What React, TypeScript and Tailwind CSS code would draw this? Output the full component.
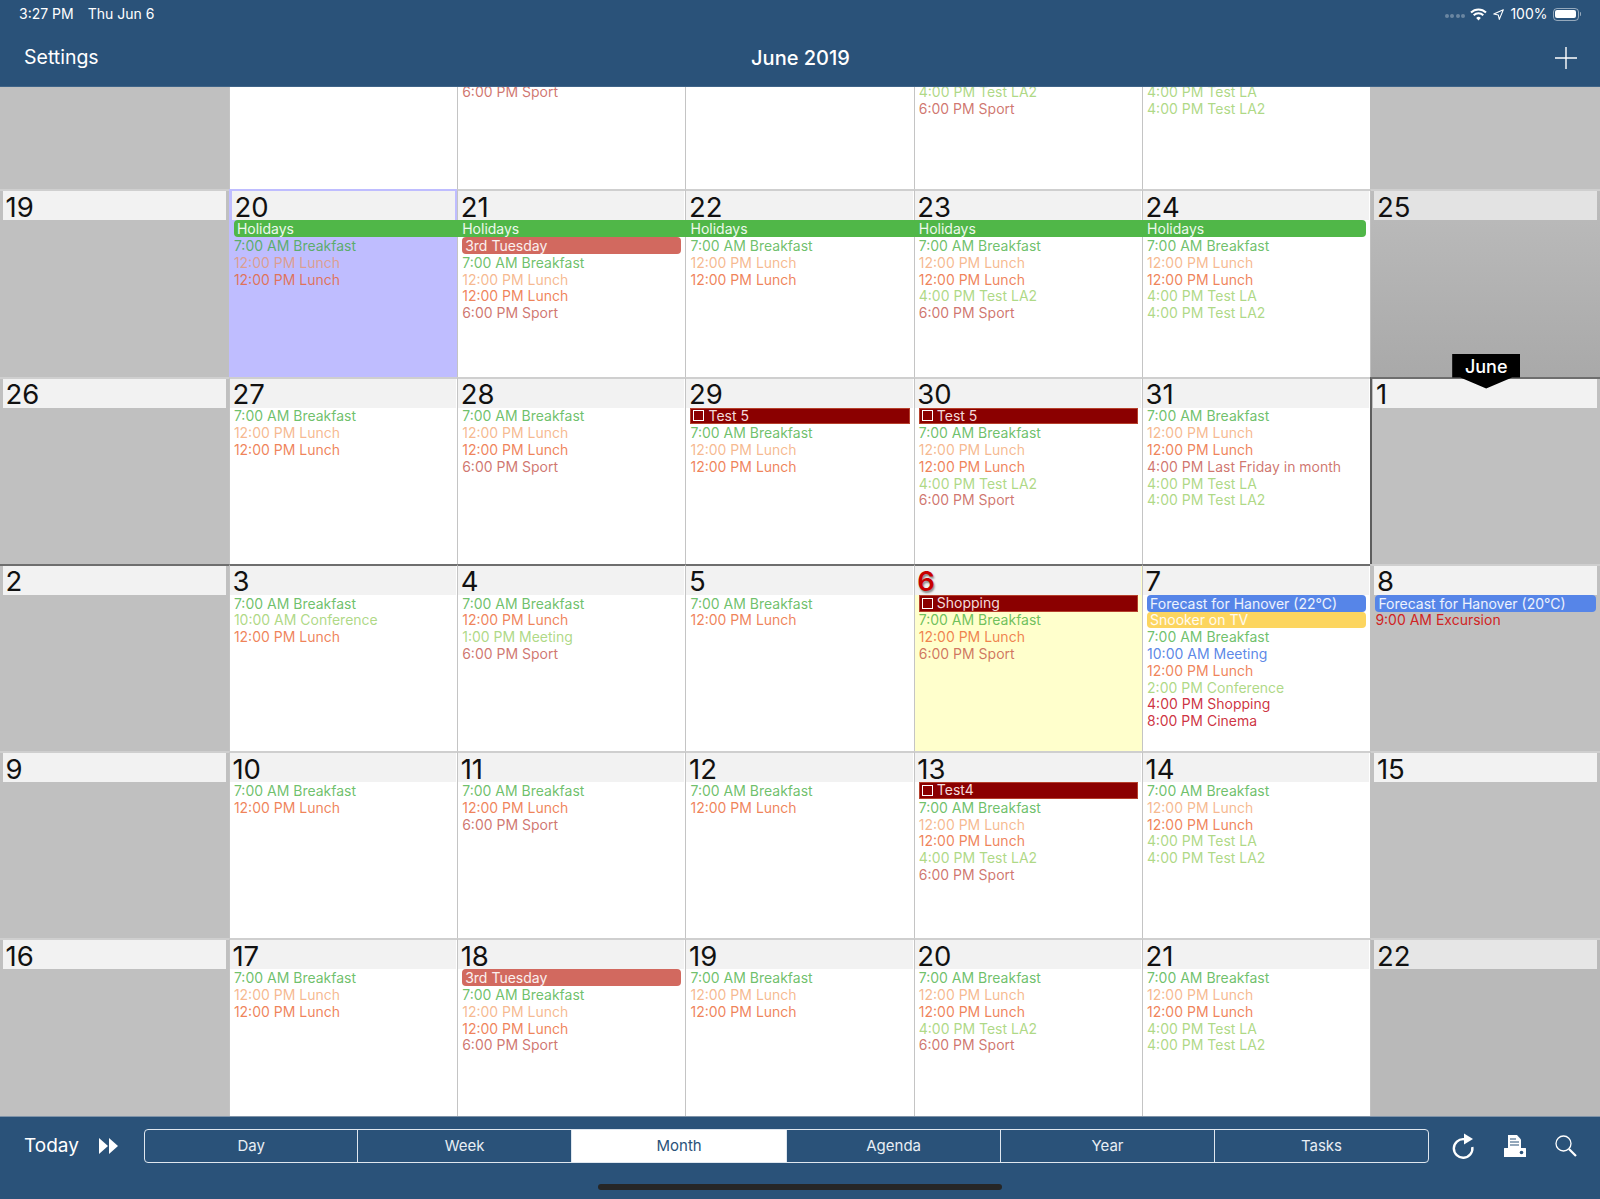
import { ReactNode } from "react";

type Ev = { text: string; color?: string; bar?: string; check?: boolean; span?: "start" | "mid" | "end" };
type Day = {
  n?: number;
  events?: Ev[];
  off?: boolean;
  selected?: boolean;
  today?: boolean;
  darkTop?: boolean;
  monthStart?: boolean;
  shade?: string;
  headShade?: string;
};

// recurring entries
const B: Ev = { text: "7:00 AM Breakfast", color: "text-[#2fa52a]/70" };
const L1: Ev = { text: "12:00 PM Lunch", color: "text-[#f08a45]/60" };
const L2: Ev = { text: "12:00 PM Lunch", color: "text-[#ea5a24]/75" };
const S: Ev = { text: "6:00 PM Sport", color: "text-[#bb3a30]/70" };
const LA: Ev = { text: "4:00 PM Test LA", color: "text-[#8cc850]/70" };
const LA2: Ev = { text: "4:00 PM Test LA2", color: "text-[#8cc850]/70" };
const TUE: Ev = { text: "3rd Tuesday", bar: "bg-[#d2695f]" };
const T5: Ev = { text: "Test 5", check: true };
const H = (span: "start" | "mid" | "end"): Ev => ({ text: "Holidays", bar: "bg-[#50b748]", span });

const weeks: Day[][] = [
  // tail of the week scrolled out under the header
  [
    { off: true },
    {},
    { events: [S] },
    {},
    { events: [LA2, S] },
    { events: [LA, LA2] },
    { off: true },
  ],
  [
    { n: 19, off: true },
    { n: 20, selected: true, events: [H("start"), B, L1, L2] },
    { n: 21, events: [H("mid"), TUE, B, L1, L2, S] },
    { n: 22, events: [H("mid"), B, L1, L2] },
    { n: 23, events: [H("mid"), B, L1, L2, LA2, S] },
    { n: 24, events: [H("end"), B, L1, L2, LA, LA2] },
    { n: 25, off: true, shade: "bg-gradient-to-b from-[#bcbcbc] to-[#a9a9a9]", headShade: "bg-[#e3e3e3]" },
  ],
  [
    { n: 26, off: true },
    { n: 27, events: [B, L1, L2] },
    { n: 28, events: [B, L1, L2, S] },
    { n: 29, events: [T5, B, L1, L2] },
    { n: 30, events: [T5, B, L1, L2, LA2, S] },
    {
      n: 31,
      events: [B, L1, L2, { text: "4:00 PM Last Friday in month", color: "text-[#bb3a30]/70" }, LA, LA2],
    },
    { n: 1, off: true, monthStart: true },
  ],
  [
    { n: 2, off: true, darkTop: true },
    {
      n: 3,
      darkTop: true,
      events: [B, { text: "10:00 AM Conference", color: "text-[#8cc850]/70" }, L2],
    },
    {
      n: 4,
      darkTop: true,
      events: [B, L2, { text: "1:00 PM Meeting", color: "text-[#8cc850]/70" }, S],
    },
    { n: 5, darkTop: true, events: [B, L2] },
    { n: 6, darkTop: true, today: true, events: [{ text: "Shopping", check: true }, B, L2, S] },
    {
      n: 7,
      darkTop: true,
      events: [
        { text: "Forecast for Hanover (22°C)", bar: "bg-[#5685e8]" },
        { text: "Snooker on TV", bar: "bg-[#fcd55f]" },
        B,
        { text: "10:00 AM Meeting", color: "text-[#4a7ae4]/90" },
        L2,
        { text: "2:00 PM Conference", color: "text-[#8cc850]/70" },
        { text: "4:00 PM Shopping", color: "text-[#c8182c]/90" },
        { text: "8:00 PM Cinema", color: "text-[#c8182c]/90" },
      ],
    },
    {
      n: 8,
      off: true,
      events: [
        { text: "Forecast for Hanover (20°C)", bar: "bg-[#5685e8]" },
        { text: "9:00 AM Excursion", color: "text-[#d02424]" },
      ],
    },
  ],
  [
    { n: 9, off: true },
    { n: 10, events: [B, L2] },
    { n: 11, events: [B, L2, S] },
    { n: 12, events: [B, L2] },
    { n: 13, events: [{ text: "Test4", check: true }, B, L1, L2, LA2, S] },
    { n: 14, events: [B, L1, L2, LA, LA2] },
    { n: 15, off: true },
  ],
  [
    { n: 16, off: true },
    { n: 17, events: [B, L1, L2] },
    { n: 18, events: [TUE, B, L1, L2, S] },
    { n: 19, events: [B, L1, L2] },
    { n: 20, events: [B, L1, L2, LA2, S] },
    { n: 21, events: [B, L1, L2, LA, LA2] },
    { n: 22, off: true, shade: "bg-[#b9b9b9]", headShade: "bg-[#e6e6e6]" },
  ],
];

const views = ["Day", "Week", "Month", "Agenda", "Year", "Tasks"];

function EventRow({ ev }: { ev: Ev }) {
  if (ev.check) {
    return (
      <div className="h-[16.8px] mr-[4px] flex items-center gap-[4px] bg-[#8b0000] border border-[#b5402c] pl-[2px] text-[14px] leading-none text-[#f3dcdc]">
        <span className="w-[11px] h-[11px] border border-white shrink-0" />
        {ev.text}
      </div>
    );
  }
  if (ev.bar) {
    let shape = "mr-[4px] rounded-[4px]";
    if (ev.span === "start") shape = "-mr-[1px] rounded-l-[4px]";
    if (ev.span === "mid") shape = "-ml-[4px] pl-[4px] -mr-[1px]";
    if (ev.span === "end") shape = "-ml-[4px] pl-[4px] mr-[4px] rounded-r-[4px]";
    return (
      <div className={`relative z-10 h-[16.8px] flex items-center px-[3px] pt-[1px] text-[14px] leading-none text-white/90 whitespace-nowrap ${ev.bar} ${shape}`}>
        {ev.text}
      </div>
    );
  }
  return <div className={`h-[16.8px] flex items-center pt-[1px] text-[14px] leading-none whitespace-nowrap ${ev.color}`}>{ev.text}</div>;
}

function DayCell({ day, first }: { day: Day; first: boolean }) {
  let bg = "bg-white";
  if (day.off) bg = day.shade ?? "bg-[#c0c0c0]";
  if (day.selected) bg = "bg-[#bfbdff]";
  if (day.today) bg = "bg-[#ffffcc]";

  let top = "border-t-[#cfcfcf]";
  if (day.selected) top = "border-t-[#bfbdff]";
  if (day.darkTop || day.monthStart) top = "border-t-[#6e6e6e]";

  const left = first ? "border-l-0" : day.monthStart ? "border-l-2 border-l-[#5e5e5e]" : day.off ? "border-l border-l-[#c0c0c0]" : day.selected ? "border-l border-l-[#bfbdff]" : "border-l border-l-[#c4c4c4]";

  let head = "mr-[1px]";
  if (day.off) head = "mx-[3px]";
  if (day.selected) head = "mx-[2px]";
  if (day.monthStart) head = "ml-[1px] mr-[3px]";

  // first row only shows what sticks out below the header
  if (day.n === undefined) {
    return (
      <div className={`min-w-0 overflow-hidden ${left} ${bg}`}>
        <div className="pl-[4px] -mt-[4px]">
          {day.events?.map((ev, i) => (
            <EventRow key={i} ev={ev} />
          ))}
        </div>
      </div>
    );
  }

  return (
    <div className={`relative min-w-0 border-t-2 ${top} ${left} ${bg}`}>
      <div className={`h-[29px] flex items-center pt-[2px] ${day.headShade ?? "bg-[#f2f2f2]"} ${head}`}>
        <span
          className={`pl-[2.5px] text-[27.5px] leading-[24px] font-normal ${
            day.today ? "text-[#c80000] font-semibold [text-shadow:1px_2px_2px_#888888]" : "text-[#111111]"
          }`}
        >
          {day.n}
        </span>
      </div>
      <div className="pl-[4px]">
        {day.events?.map((ev, i) => (
          <EventRow key={i} ev={ev} />
        ))}
      </div>
      {day.monthStart && (
        <div className="absolute left-1/2 -top-[25px] -translate-x-1/2 z-20 w-[68px] h-[35px] pt-[3px] bg-black text-center text-[18px] leading-[20px] font-medium text-white [clip-path:polygon(0_0,100%_0,100%_24px,88%_24px,50%_35px,12%_24px,0_24px)]">
          June
        </div>
      )}
    </div>
  );
}

function IconBtn({ children, className }: { children: ReactNode; className?: string }) {
  return <button className={`flex items-center justify-center text-white ${className ?? ""}`}>{children}</button>;
}

export default function App() {
  return (
    <div className="w-[1600px] h-[1199px] flex flex-col overflow-hidden bg-[#2a5279] font-['Inter','Liberation_Sans',sans-serif]">
      {/* status + nav */}
      <div className="h-[87px] shrink-0 border-b border-[#3f6488] text-white">
        <div className="h-[28px] flex items-center justify-between pl-[19px] pr-[19px] text-[14px] leading-none">
          <div className="flex gap-[14px]">
            <span>3:27 PM</span>
            <span>Thu Jun 6</span>
          </div>
          <div className="flex items-center">
            <div className="flex gap-[1.5px] mr-[5px] mt-[4px]">
              <span className="w-[4px] h-[4px] rounded-full bg-white/30" />
              <span className="w-[4px] h-[4px] rounded-full bg-white/30" />
              <span className="w-[4px] h-[4px] rounded-full bg-white/30" />
              <span className="w-[4px] h-[4px] rounded-full bg-white/30" />
            </div>
            <svg width="17" height="13" viewBox="0 0 17 13" fill="none" stroke="white" strokeWidth="2" className="mr-[6px]">
              <path d="M1 4.5a10.6 10.6 0 0 1 15 0" />
              <path d="M3.7 7.3a6.8 6.8 0 0 1 9.6 0" />
              <path d="M8.5 12.5 6.2 10a3.2 3.2 0 0 1 4.6 0z" fill="white" stroke="none" />
            </svg>
            <svg width="11" height="11" viewBox="0 0 11 11" fill="none" stroke="white" strokeWidth="1.1" strokeLinejoin="round" className="mr-[6px]">
              <path d="M10.3.7 .8 5l4.5 1 1 4.4z" />
            </svg>
            <span className="mr-[5px]">100%</span>
            <div className="w-[26px] h-[13px] rounded-[4px] border border-white/50 p-[1.5px]">
              <div className="w-full h-full rounded-[2px] bg-white" />
            </div>
            <span className="ml-[1px] w-[1.5px] h-[4px] rounded-r-sm bg-white/50" />
          </div>
        </div>
        <div className="h-[58px] grid grid-cols-[1fr_auto_1fr] items-center pl-[24px] pr-[23px] pt-[2px]">
          <span className="text-[19.5px]">Settings</span>
          <span className="text-[20px] font-medium">June 2019</span>
          <IconBtn className="justify-self-end">
            <svg width="22" height="22" viewBox="0 0 22 22" stroke="white" strokeWidth="1.4">
              <path d="M11 0v22M0 11h22" />
            </svg>
          </IconBtn>
        </div>
      </div>

      {/* month grid */}
      <div className="h-[1029px] shrink-0 bg-white grid grid-cols-[228.9px_repeat(5,228.3px)_1fr] grid-rows-[102.3px_repeat(4,187.25px)_177.7px]">
        {weeks.map((week, w) =>
          week.map((day, d) => <DayCell key={`${w}-${d}`} day={day} first={d === 0} />)
        )}
      </div>

      {/* toolbar */}
      <div className="flex-1 flex flex-col border-t border-[#7f93a8]">
        <div className="flex items-center mt-[12px] pl-[24px] text-white">
          <span className="text-[19px] w-[75px]">Today</span>
          <IconBtn className="w-[19px]">
            <svg width="19" height="16" viewBox="0 0 19 16" fill="white">
              <path d="M0 0 9 8 0 16zM10 0l9 8-9 8z" />
            </svg>
          </IconBtn>
          <div className="ml-[26px] w-[1285px] h-[34px] grid grid-cols-[212.3px_213.7px_215.3px_213.7px_214px_1fr] rounded-[4px] border border-[#dfe7ef] overflow-hidden">
            {views.map((v, i) => (
              <div
                key={v}
                className={`flex items-center justify-center text-[15px] ${i > 0 ? "border-l border-[#dfe7ef]" : ""} ${
                  v === "Month" ? "bg-white text-[#2a5279]" : "text-[#e8eef4]"
                }`}
              >
                {v}
              </div>
            ))}
          </div>
          <IconBtn className="ml-[22px] w-[24px]">
            <svg width="24" height="28" viewBox="0 0 24 28" fill="none" stroke="white" strokeWidth="2.4">
              <path d="M13 7.2A9.3 9.3 0 1 0 21.3 15" />
              <path d="M13 1.5 22 7l-9 5.5z" fill="white" stroke="none" />
            </svg>
          </IconBtn>
          <IconBtn className="ml-[28px] w-[24px]">
            <svg width="24" height="24" viewBox="0 0 24 24" fill="white">
              <path d="M5 1h9l4 4.5V14H5z" />
              <path d="M7 5h6M7 8h9M7 11h9" stroke="#2a5279" strokeWidth="1.2" />
              <path d="M1.5 14H22.500a.5.5 0 0 1 .5.5V23H1V14.500a.5.5 0 0 1 .5-.5z" />
              <circle cx="18.500" cy="18.500" r="1.800" fill="#2a5279" />
            </svg>
          </IconBtn>
          <IconBtn className="ml-[28px] w-[22px]">
            <svg width="22" height="22" viewBox="0 0 22 22" fill="none" stroke="white">
              <circle cx="8.500" cy="8.500" r="7.500" strokeWidth="1.300" />
              <path d="M14 14l7 7" strokeWidth="2.200" />
            </svg>
          </IconBtn>
        </div>
        <div className="mt-[21px] mx-auto w-[404px] h-[6px] rounded-full bg-[#262626]" />
      </div>
    </div>
  );
}
